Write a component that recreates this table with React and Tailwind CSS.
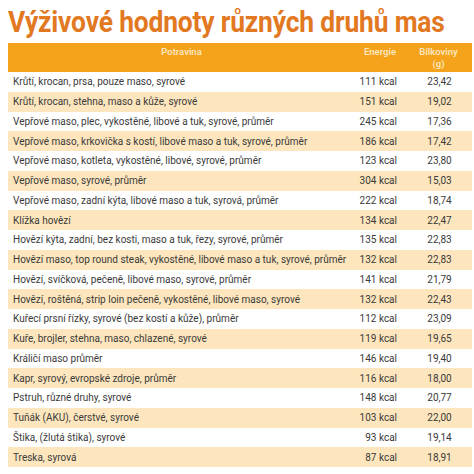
import React from 'react';

const rows = [
    ['Krůtí, krocan, prsa, pouze maso, syrové', '111 kcal', '23,42'],
    ['Krůtí, krocan, stehna, maso a kůže, syrové', '151 kcal', '19,02'],
    ['Vepřové maso, plec, vykostěné, libové a tuk, syrové, průměr', '245 kcal', '17,36'],
    ['Vepřové maso, krkovička s kostí, libové maso a tuk, syrové, průměr', '186 kcal', '17,42'],
    ['Vepřové maso, kotleta, vykostěné, libové, syrové, průměr', '123 kcal', '23,80'],
    ['Vepřové maso, syrové, průměr', '304 kcal', '15,03'],
    ['Vepřové maso, zadní kýta, libové maso a tuk, syrová, průměr', '222 kcal', '18,74'],
    ['Klížka hovězí', '134 kcal', '22,47'],
    ['Hovězí kýta, zadní, bez kosti, maso a tuk, řezy, syrové, průměr', '135 kcal', '22,83'],
    ['Hovězí maso, top round steak, vykostěné, libové maso a tuk, syrové, průměr', '132 kcal', '22,83'],
    ['Hovězí, svíčková, pečeně, libové maso, syrové, průměr', '141 kcal', '21,79'],
    ['Hovězí, roštěná, strip loin pečeně, vykostěné, libové maso, syrové', '132 kcal', '22,43'],
    ['Kuřecí prsní řízky, syrové (bez kostí a kůže), průměr', '112 kcal', '23,09'],
    ['Kuře, brojler, stehna, maso, chlazené, syrové', '119 kcal', '19,65'],
    ['Králičí maso průměr', '146 kcal', '19,40'],
    ['Kapr, syrový, evropské zdroje, průměr', '116 kcal', '18,00'],
    ['Pstruh, různé druhy, syrové', '148 kcal', '20,77'],
    ['Tuňák (AKU), čerstvé, syrové', '103 kcal', '22,00'],
    ['Štika, (žlutá štika), syrové', '93 kcal', '19,14'],
    ['Treska, syrová', '87 kcal', '18,91'],
];

export default function App() {
    return (
        <div className="w-[474px] h-[474px] bg-white overflow-hidden font-['Roboto',sans-serif]">
            <div className="pl-[8px] pt-[6px] h-[43px]">
                <h1 className="inline-block origin-left scale-x-[0.88] text-[30px] leading-[32px] font-bold tracking-[-0.2px] text-[#e2781f] whitespace-nowrap">
                    Výživové hodnoty různých druhů mas
                </h1>
            </div>

            <div className="ml-[8px] w-[464px]">
                {/* header */}
                <div className="grid grid-cols-[347px_50px_67px] h-[29px] bg-[#f4a31b] text-[#fde6bf] text-[9.5px] font-semibold leading-[12px]">
                    <div className="flex items-start justify-center pt-[3px]">Potravina</div>
                    <div className="flex items-start justify-center pt-[3px]">Energie</div>
                    <div className="flex flex-col items-center pt-[3px]">
                        <span>Bílkoviny</span>
                        <span>(g)</span>
                    </div>
                </div>

                {rows.map((r, i) => (
                    <div
                        key={i}
                        className={`grid grid-cols-[347px_50px_67px] h-[19.75px] items-center text-[10px] text-[#3a3a3a] ${i % 2 === 1 ? 'bg-[#fde6bd]' : 'bg-white'}`}
                    >
                        <div className="pl-[5px] whitespace-nowrap">{r[0]}</div>
                        <div className="text-right pr-[8px] whitespace-nowrap">{r[1]}</div>
                        <div className="text-center pl-[2px]">{r[2]}</div>
                    </div>
                ))}
            </div>
        </div>
    );
}
